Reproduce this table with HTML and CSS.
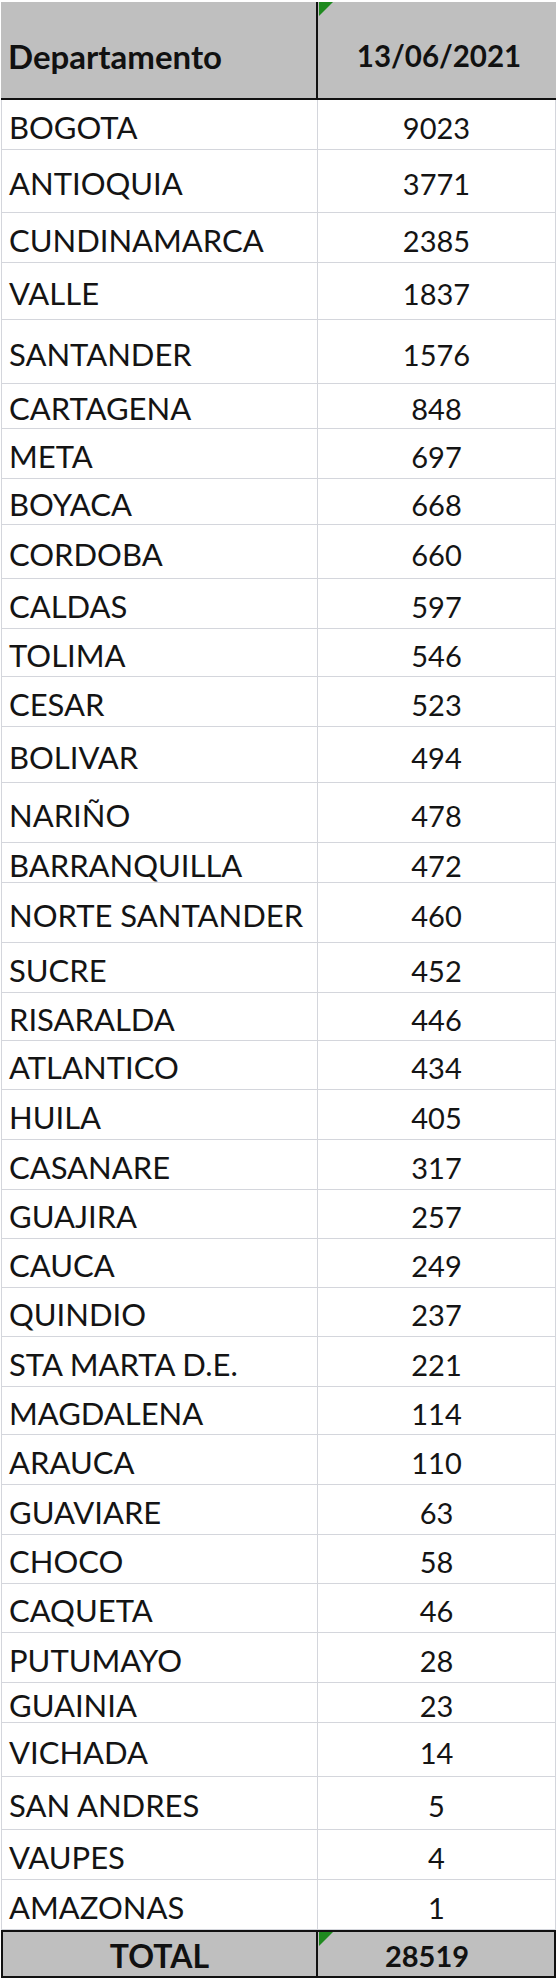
FILE: index.html
```html
<!DOCTYPE html>
<html lang="es">
<head>
<meta charset="utf-8">
<title>Departamento 13/06/2021</title>
<link rel="stylesheet" href="styles.css">
</head>
<body>
<div class="sheet">
  <div class="cell head name">Departamento</div>
  <div class="cell head num"><span class="flag"></span>13/06/2021</div>

  <div class="cell name">BOGOTA</div><div class="cell num">9023</div>
  <div class="cell name">ANTIOQUIA</div><div class="cell num">3771</div>
  <div class="cell name">CUNDINAMARCA</div><div class="cell num">2385</div>
  <div class="cell name">VALLE</div><div class="cell num">1837</div>
  <div class="cell name">SANTANDER</div><div class="cell num">1576</div>
  <div class="cell name">CARTAGENA</div><div class="cell num">848</div>
  <div class="cell name">META</div><div class="cell num">697</div>
  <div class="cell name">BOYACA</div><div class="cell num">668</div>
  <div class="cell name">CORDOBA</div><div class="cell num">660</div>
  <div class="cell name">CALDAS</div><div class="cell num">597</div>
  <div class="cell name">TOLIMA</div><div class="cell num">546</div>
  <div class="cell name">CESAR</div><div class="cell num">523</div>
  <div class="cell name">BOLIVAR</div><div class="cell num">494</div>
  <div class="cell name">NARIÑO</div><div class="cell num">478</div>
  <div class="cell name">BARRANQUILLA</div><div class="cell num">472</div>
  <div class="cell name">NORTE SANTANDER</div><div class="cell num">460</div>
  <div class="cell name">SUCRE</div><div class="cell num">452</div>
  <div class="cell name">RISARALDA</div><div class="cell num">446</div>
  <div class="cell name">ATLANTICO</div><div class="cell num">434</div>
  <div class="cell name">HUILA</div><div class="cell num">405</div>
  <div class="cell name">CASANARE</div><div class="cell num">317</div>
  <div class="cell name">GUAJIRA</div><div class="cell num">257</div>
  <div class="cell name">CAUCA</div><div class="cell num">249</div>
  <div class="cell name">QUINDIO</div><div class="cell num">237</div>
  <div class="cell name">STA MARTA D.E.</div><div class="cell num">221</div>
  <div class="cell name">MAGDALENA</div><div class="cell num">114</div>
  <div class="cell name">ARAUCA</div><div class="cell num">110</div>
  <div class="cell name">GUAVIARE</div><div class="cell num">63</div>
  <div class="cell name">CHOCO</div><div class="cell num">58</div>
  <div class="cell name">CAQUETA</div><div class="cell num">46</div>
  <div class="cell name">PUTUMAYO</div><div class="cell num">28</div>
  <div class="cell name">GUAINIA</div><div class="cell num">23</div>
  <div class="cell name">VICHADA</div><div class="cell num">14</div>
  <div class="cell name">SAN ANDRES</div><div class="cell num">5</div>
  <div class="cell name">VAUPES</div><div class="cell num">4</div>
  <div class="cell name">AMAZONAS</div><div class="cell num">1</div>

  <div class="cell total name">TOTAL</div>
  <div class="cell total num"><span class="flag"></span>28519</div>
</div>
</body>
</html>
```

FILE: styles.css
```css
* { box-sizing: border-box; }

html, body {
  margin: 0;
  padding: 0;
  background: #ffffff;
}

body {
  font-family: Lato, "Open Sans", "Liberation Sans", sans-serif;
  color: #141414;
}

.sheet {
  display: grid;
  grid-template-columns: 317px 238px;
  grid-template-rows:
    98px
    50px 63px 50px 57px 64px 45px 50px 46px 54px 50px
    48px 50px 56px 60px 40px 60px 50px 48px 49px 50px
    50px 49px 49px 49px 50px 48px 50px 50px 49px 49px
    50px 40px 54px 53px 50px 50px
    48px;
  margin: 2px 0 0 1px;
  width: 555px;
}

.cell {
  position: relative;
  display: flex;
  align-items: center;
  line-height: 1;
  padding-top: 5px;
  border-bottom: 1px solid #d4d6dc;
  white-space: nowrap;
}

.name {
  font-size: 31px;
  padding-left: 7px;
  border-left: 1px solid #d4d6dc;
  border-right: 1px solid #d4d6dc;
}

.num {
  font-size: 29px;
  justify-content: center;
  border-right: 1px solid #d4d6dc;
}

.head {
  background: #bfbfbf;
  font-weight: 700;
  color: #111111;
  border-bottom: 2px solid #111111;
  padding-top: 12px;
}

.head.name {
  font-size: 33px;
  border-left: none;
  border-right: 2px solid #111111;
}

.head.num {
  font-size: 29.5px;
  border-right: none;
  padding-left: 4px;
}

.total {
  background: #bfbfbf;
  font-weight: 700;
  color: #111111;
  border-top: 2px solid #111111;
  border-bottom: 2px solid #111111;
  padding-top: 3px;
}

.total.name {
  font-size: 32px;
  justify-content: center;
  padding-left: 0;
  border-left: 2px solid #111111;
  border-right: 2px solid #111111;
}

.total.num {
  font-size: 29px;
  justify-content: center;
  padding-right: 18px;
  border-right: 2px solid #111111;
}

.flag {
  position: absolute;
  top: 0;
  left: 1px;
  width: 0;
  height: 0;
  border-top: 14px solid #1f8a1f;
  border-right: 14px solid transparent;
}
```
